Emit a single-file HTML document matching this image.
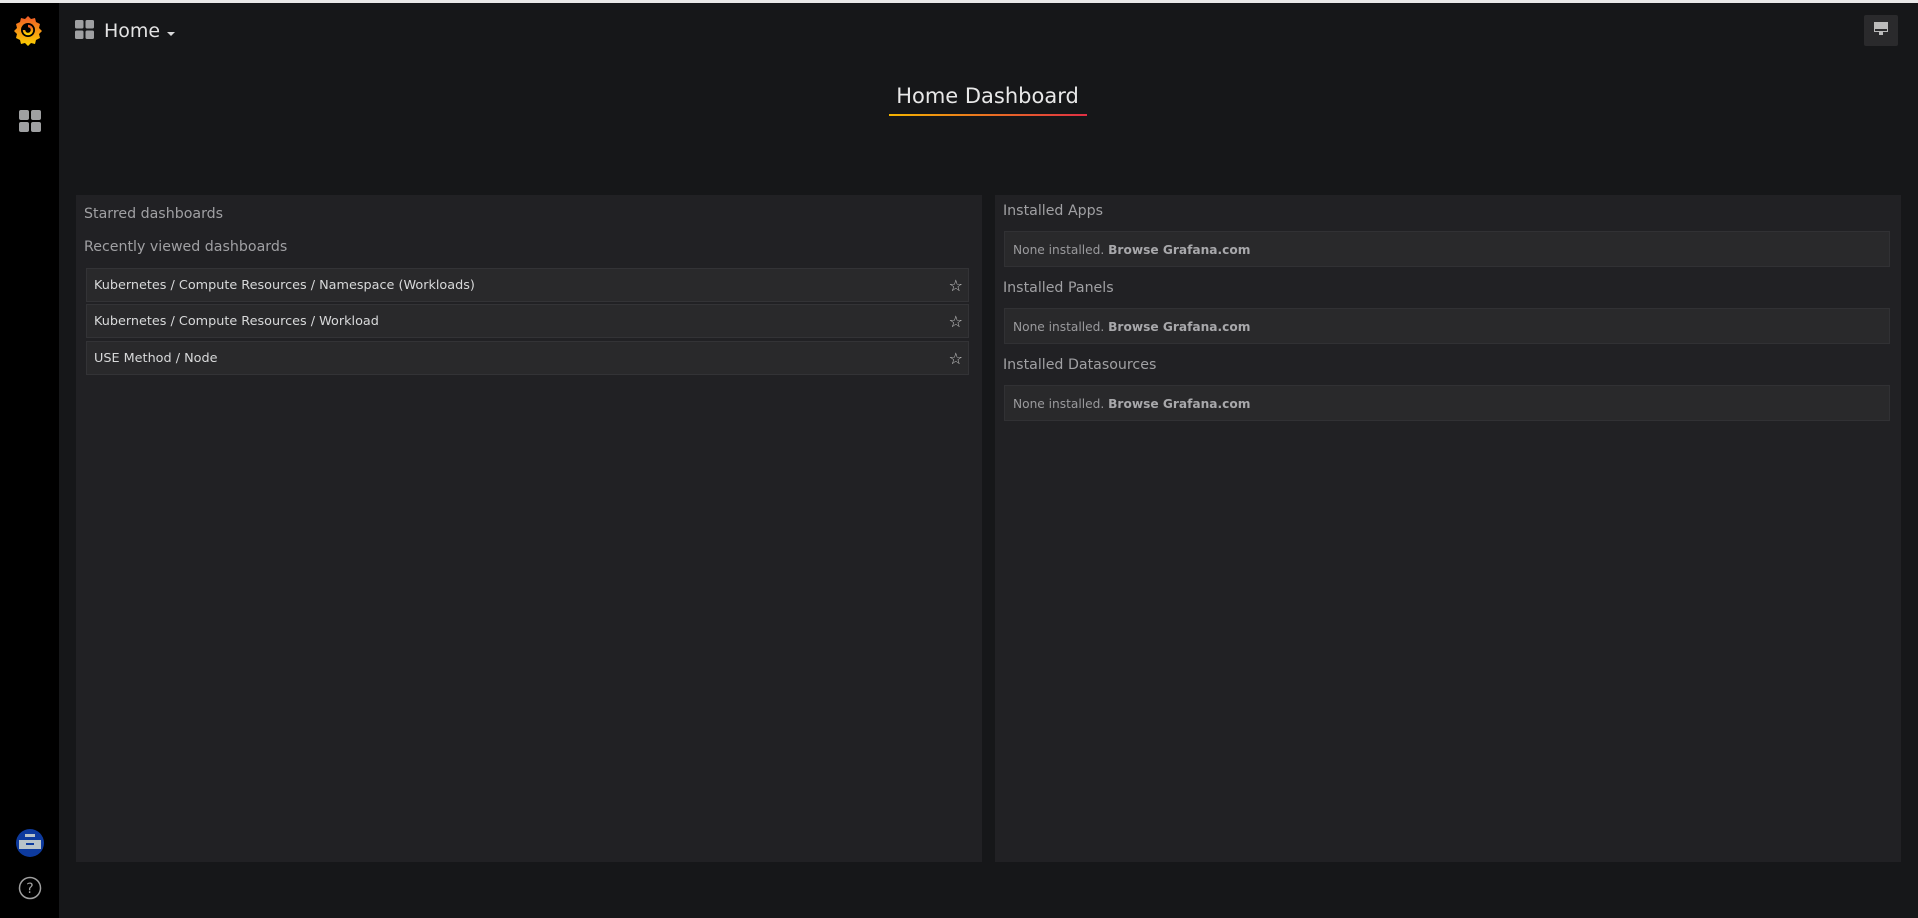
<!DOCTYPE html>
<html><head><meta charset="utf-8"><style>
*{margin:0;padding:0;box-sizing:border-box}
body{width:1918px;height:918px;background:#161719;font-family:"DejaVu Sans","Liberation Sans",sans-serif;position:relative;overflow:hidden;color:#d8d9da}
.top{position:absolute;left:0;top:0;width:1918px;height:3px;background:#e8e8e8}
.side{position:absolute;left:0;top:3px;width:59px;height:915px;background:#000}
.a{position:absolute}
.panel{position:absolute;background:#212124}
.row{position:absolute;left:86px;width:883px;height:34px;background:#29292b;border:1px solid #333336;font-size:12.8px;color:#d8d9da;line-height:33px;padding-left:7px}
.row .st{position:absolute;right:5px;top:0;color:#ccc;font-size:16px}
.lbl{position:absolute;font-size:14.2px;color:#a0a0a3}
.box{position:absolute;left:1004px;width:886px;height:36px;background:#29292b;border:1px solid #313134;font-size:12.2px;color:#9a9a9d;line-height:36px;padding-left:8px}
.box b{color:#a8a8ab}
</style></head><body>
<div class="top"></div>
<div class="side"></div>
<svg class="a" style="left:12px;top:14px" width="32" height="32" viewBox="0 0 32 32">
<defs><linearGradient id="g" x1="0" y1="1" x2="0" y2="0"><stop offset="0" stop-color="#fcd200"/><stop offset="1" stop-color="#f05a28"/></linearGradient></defs>
<path fill="url(#g)" d="M16 2l3 3 4-1 1 4 4 2-1 4 3 3-3 3 1 4-4 2-1 4-4-1-3 3-3-3-4 1-1-4-4-2 1-4-3-3 3-3-1-4 4-2 1-4 4 1z"/>
<circle cx="16" cy="16" r="7" fill="#000"/>
<path d="M16 12a4 4 0 1 1-4 4" stroke="url(#g)" stroke-width="2.5" fill="none"/>
</svg>
<svg class="a" style="left:19px;top:110px" width="22" height="22"><g fill="#9fa0a2"><rect x="0" y="0" width="10" height="10" rx="2"/><rect x="12" y="0" width="10" height="10" rx="2"/><rect x="0" y="12" width="10" height="10" rx="2"/><rect x="12" y="12" width="10" height="10" rx="2"/></g></svg>
<svg class="a" style="left:16px;top:829px" width="28" height="28"><circle cx="14" cy="14" r="14" fill="#0d3a9e"/><g fill="#b9c3c9"><rect x="9" y="5" width="10" height="3"/><rect x="3" y="11" width="22" height="9"/></g><rect x="10" y="14" width="8" height="2" fill="#0d3a9e"/></svg>
<svg class="a" style="left:18px;top:876px" width="24" height="24"><circle cx="12" cy="12" r="10.5" stroke="#a0a0a0" stroke-width="1.5" fill="none"/><text x="12" y="17" text-anchor="middle" font-size="14" fill="#a0a0a0" font-family="DejaVu Sans">?</text></svg>
<svg class="a" style="left:75px;top:20px" width="19" height="19"><g fill="#9fa0a2"><rect x="0" y="0" width="8.5" height="8.5" rx="1.5"/><rect x="10.5" y="0" width="8.5" height="8.5" rx="1.5"/><rect x="0" y="10.5" width="8.5" height="8.5" rx="1.5"/><rect x="10.5" y="10.5" width="8.5" height="8.5" rx="1.5"/></g></svg>
<div class="a" style="left:104px;top:20px;font-size:19px;color:#e3e3e3">Home</div>
<div class="a" style="left:167px;top:32px;width:0;height:0;border-left:4px solid transparent;border-right:4px solid transparent;border-top:4px solid #d8d9da"></div>
<div class="a" style="left:1864px;top:15px;width:34px;height:31px;background:#2a2a2c;border-radius:2px"></div>
<svg class="a" style="left:1874px;top:22px" width="14" height="16"><rect x="0.5" y="0.5" width="13" height="9" fill="none" stroke="#bbb"/><rect x="1" y="1" width="12" height="6" fill="#bbb"/><rect x="5" y="10" width="4" height="3" fill="#bbb"/></svg>
<div class="a" style="left:888px;top:84px;width:199px;text-align:center;font-size:21px;color:#e8e8e8">Home Dashboard</div>
<div class="a" style="left:889px;top:114px;width:198px;height:2px;background:linear-gradient(90deg,#f4b400,#e02f44)"></div>
<div class="panel" style="left:76px;top:195px;width:906px;height:667px"></div>
<div class="lbl" style="left:84px;top:206px">Starred dashboards</div>
<div class="lbl" style="left:84px;top:239px">Recently viewed dashboards</div>
<div class="row" style="top:268px">Kubernetes / Compute Resources / Namespace (Workloads)<span class="st">☆</span></div>
<div class="row" style="top:304px">Kubernetes / Compute Resources / Workload<span class="st">☆</span></div>
<div class="row" style="top:341px">USE Method / Node<span class="st">☆</span></div>
<div class="panel" style="left:995px;top:195px;width:906px;height:667px"></div>
<div class="lbl" style="left:1003px;top:203px">Installed Apps</div>
<div class="box" style="top:231px">None installed. <b>Browse Grafana.com</b></div>
<div class="lbl" style="left:1003px;top:280px">Installed Panels</div>
<div class="box" style="top:308px">None installed. <b>Browse Grafana.com</b></div>
<div class="lbl" style="left:1003px;top:357px">Installed Datasources</div>
<div class="box" style="top:385px">None installed. <b>Browse Grafana.com</b></div>
</body></html>
